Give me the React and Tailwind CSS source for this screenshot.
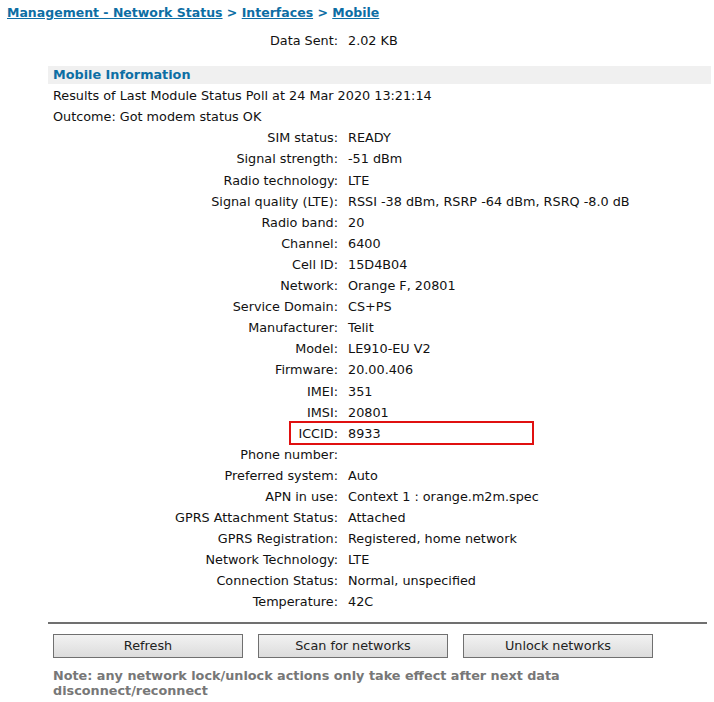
import React from 'react';

const rows = [
  ['SIM status', 'READY'],
  ['Signal strength', '-51 dBm'],
  ['Radio technology', 'LTE'],
  ['Signal quality (LTE)', 'RSSI -38 dBm, RSRP -64 dBm, RSRQ -8.0 dB'],
  ['Radio band', '20'],
  ['Channel', '6400'],
  ['Cell ID', '15D4B04'],
  ['Network', 'Orange F, 20801'],
  ['Service Domain', 'CS+PS'],
  ['Manufacturer', 'Telit'],
  ['Model', 'LE910-EU V2'],
  ['Firmware', '20.00.406'],
  ['IMEI', '351'],
  ['IMSI', '20801'],
  ['ICCID', '8933', true],
  ['Phone number', ''],
  ['Preferred system', 'Auto'],
  ['APN in use', 'Context 1 : orange.m2m.spec'],
  ['GPRS Attachment Status', 'Attached'],
  ['GPRS Registration', 'Registered, home network'],
  ['Network Technology', 'LTE'],
  ['Connection Status', 'Normal, unspecified'],
  ['Temperature', '42C'],
];

const Row = ({ label, value, marked }) => (
  <div className="relative flex h-[21.1px] items-center">
    <div className="w-[295px] shrink-0 pr-[10px] text-right">{label}:</div>
    <div>{value}</div>
    {marked && (
      <div className="absolute left-[236px] top-[-2px] h-[24px] w-[245px] border-2 border-[#e01010]"></div>
    )}
  </div>
);

const Button = ({ children }) => (
  <button className="h-[24px] w-[190px] border border-[#707070] bg-gradient-to-b from-[#f2f2f2] to-[#dcdcdc] text-[12.8px] text-[#222]">
    {children}
  </button>
);

export default function App() {
  return (
    <div className="min-h-screen bg-white text-[12.8px] text-[#111]" style={{ fontFamily: '"DejaVu Sans", Verdana, sans-serif' }}>
      {/* Breadcrumb */}
      <div className="h-[22.75px] px-[7px] pt-[4px] text-[12.5px] font-bold leading-[18.75px] text-[#0d6ea4]">
        <span className="underline">Management - Network Status</span>
        <span> &gt; </span>
        <span className="underline">Interfaces</span>
        <span> &gt; </span>
        <span className="underline">Mobile</span>
      </div>

      <div className="mt-[7px] flex h-[21px] items-center">
        <div className="w-[348px] shrink-0 pr-[10px] text-right">Data Sent:</div>
        <div>2.02 KB</div>
      </div>

      <div className="ml-[48px] mr-[3px] mt-[15px]">
        <div className="flex h-[18px] items-center bg-[#f0f0f0] px-[5px] text-[12.8px] font-bold text-[#0d6ea4]">
          Mobile Information
        </div>

        <div className="pl-[5px] pt-[1.5px]">
          <div className="flex h-[21.1px] items-center">Results of Last Module Status Poll at 24 Mar 2020 13:21:14</div>
          <div className="flex h-[21.1px] items-center">Outcome: Got modem status OK</div>
          {rows.map(([l, v, m]) => (
            <Row key={l} label={l} value={v} marked={m} />
          ))}
        </div>

        <div className="mr-[4px] mt-[9px] border-t-2 border-[#707070]"></div>

        <div className="flex gap-[15px] pl-[5px] pt-[10px]">
          <Button>Refresh</Button>
          <Button>Scan for networks</Button>
          <Button>Unlock networks</Button>
        </div>

        <div className="pl-[5px] pt-[10px] font-bold leading-[15px] text-[#777]">
          Note: any network lock/unlock actions only take effect after next data
          <br />
          disconnect/reconnect
        </div>
      </div>
    </div>
  );
}
